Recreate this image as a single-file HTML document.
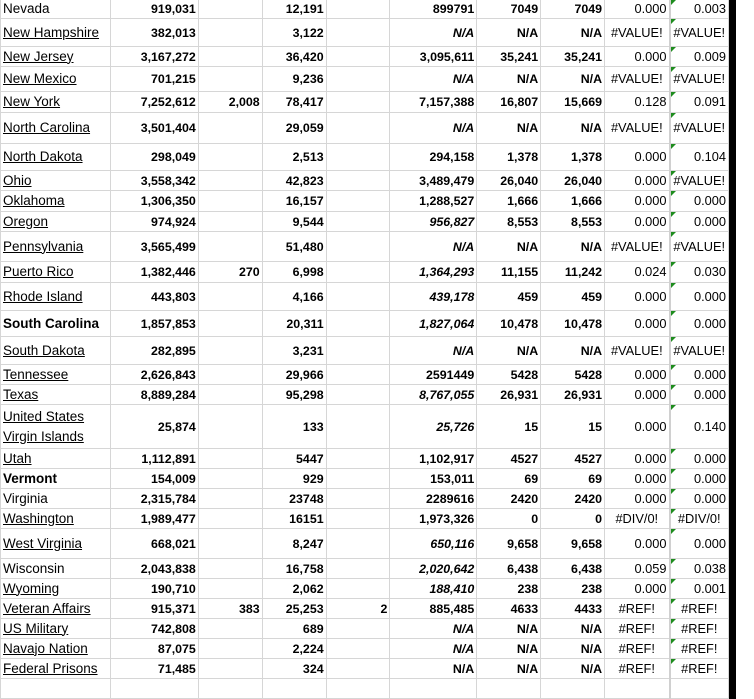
<!DOCTYPE html>
<html><head><meta charset="utf-8"><style>
html,body{margin:0;padding:0;background:#fff;width:754px;height:684px;overflow:hidden}
table{border-collapse:collapse;table-layout:fixed;position:absolute;left:0;top:-1px;font-family:"Liberation Sans",sans-serif;font-size:12.4px;color:#000}
td{border:1px solid #d6d6d6;padding:0 2px 0 2px;white-space:nowrap;overflow:hidden;text-align:right;font-weight:bold;vertical-align:middle;position:relative;line-height:14px}
td.a{text-align:left;font-weight:normal;font-size:13.5px;padding-left:2px}
td.a.u{text-decoration:underline}
td.a.b{font-weight:bold}
td.i,td.j{font-weight:normal;font-size:12.8px}
td.e{text-align:center}
td.it{font-style:italic}
td.k{background:#000;border:none}
td.l{border:none;border-left:0}
td.j::before{content:"";position:absolute;left:0;top:0;border-top:5px solid #1e8c1e;border-right:5px solid transparent}
td.i{border-right:2px solid #d0d0d0}
</style></head><body>
<table>
<colgroup><col style="width:110px"><col style="width:88px"><col style="width:64px"><col style="width:64px"><col style="width:64px"><col style="width:87px"><col style="width:64px"><col style="width:64px"><col style="width:65px"><col style="width:59px"><col style="width:8px"><col style="width:17px"></colgroup>
<tr style="height:19px"><td class="a">Nevada</td><td>919,031</td><td></td><td>12,191</td><td></td><td>899791</td><td>7049</td><td>7049</td><td class="i">0.000</td><td class="j">0.003</td><td class="k"></td><td class="l"></td></tr>
<tr style="height:28px"><td class="a u">New Hampshire</td><td>382,013</td><td></td><td>3,122</td><td></td><td class="it">N/A</td><td>N/A</td><td>N/A</td><td class="i e">#VALUE!</td><td class="j e">#VALUE!</td><td class="k"></td><td class="l"></td></tr>
<tr style="height:20px"><td class="a u">New Jersey</td><td>3,167,272</td><td></td><td>36,420</td><td></td><td>3,095,611</td><td>35,241</td><td>35,241</td><td class="i">0.000</td><td class="j">0.009</td><td class="k"></td><td class="l"></td></tr>
<tr style="height:25px"><td class="a u">New Mexico</td><td>701,215</td><td></td><td>9,236</td><td></td><td class="it">N/A</td><td>N/A</td><td>N/A</td><td class="i e">#VALUE!</td><td class="j e">#VALUE!</td><td class="k"></td><td class="l"></td></tr>
<tr style="height:21px"><td class="a u">New York</td><td>7,252,612</td><td>2,008</td><td>78,417</td><td></td><td>7,157,388</td><td>16,807</td><td>15,669</td><td class="i">0.128</td><td class="j">0.091</td><td class="k"></td><td class="l"></td></tr>
<tr style="height:31px"><td class="a u">North Carolina</td><td>3,501,404</td><td></td><td>29,059</td><td></td><td class="it">N/A</td><td>N/A</td><td>N/A</td><td class="i e">#VALUE!</td><td class="j e">#VALUE!</td><td class="k"></td><td class="l"></td></tr>
<tr style="height:27px"><td class="a u">North Dakota</td><td>298,049</td><td></td><td>2,513</td><td></td><td>294,158</td><td>1,378</td><td>1,378</td><td class="i">0.000</td><td class="j">0.104</td><td class="k"></td><td class="l"></td></tr>
<tr style="height:20px"><td class="a u">Ohio</td><td>3,558,342</td><td></td><td>42,823</td><td></td><td>3,489,479</td><td>26,040</td><td>26,040</td><td class="i">0.000</td><td class="j e">#VALUE!</td><td class="k"></td><td class="l"></td></tr>
<tr style="height:21px"><td class="a u">Oklahoma</td><td>1,306,350</td><td></td><td>16,157</td><td></td><td>1,288,527</td><td>1,666</td><td>1,666</td><td class="i">0.000</td><td class="j">0.000</td><td class="k"></td><td class="l"></td></tr>
<tr style="height:20px"><td class="a u">Oregon</td><td>974,924</td><td></td><td>9,544</td><td></td><td class="it">956,827</td><td>8,553</td><td>8,553</td><td class="i">0.000</td><td class="j">0.000</td><td class="k"></td><td class="l"></td></tr>
<tr style="height:30px"><td class="a u">Pennsylvania</td><td>3,565,499</td><td></td><td>51,480</td><td></td><td class="it">N/A</td><td>N/A</td><td>N/A</td><td class="i e">#VALUE!</td><td class="j e">#VALUE!</td><td class="k"></td><td class="l"></td></tr>
<tr style="height:21px"><td class="a u">Puerto Rico</td><td>1,382,446</td><td>270</td><td>6,998</td><td></td><td class="it">1,364,293</td><td>11,155</td><td>11,242</td><td class="i">0.024</td><td class="j">0.030</td><td class="k"></td><td class="l"></td></tr>
<tr style="height:28px"><td class="a u">Rhode Island</td><td>443,803</td><td></td><td>4,166</td><td></td><td class="it">439,178</td><td>459</td><td>459</td><td class="i">0.000</td><td class="j">0.000</td><td class="k"></td><td class="l"></td></tr>
<tr style="height:26px"><td class="a b">South Carolina</td><td>1,857,853</td><td></td><td>20,311</td><td></td><td class="it">1,827,064</td><td>10,478</td><td>10,478</td><td class="i">0.000</td><td class="j">0.000</td><td class="k"></td><td class="l"></td></tr>
<tr style="height:28px"><td class="a u">South Dakota</td><td>282,895</td><td></td><td>3,231</td><td></td><td class="it">N/A</td><td>N/A</td><td>N/A</td><td class="i e">#VALUE!</td><td class="j e">#VALUE!</td><td class="k"></td><td class="l"></td></tr>
<tr style="height:20px"><td class="a u">Tennessee</td><td>2,626,843</td><td></td><td>29,966</td><td></td><td>2591449</td><td>5428</td><td>5428</td><td class="i">0.000</td><td class="j">0.000</td><td class="k"></td><td class="l"></td></tr>
<tr style="height:20px"><td class="a u">Texas</td><td>8,889,284</td><td></td><td>95,298</td><td></td><td class="it">8,767,055</td><td>26,931</td><td>26,931</td><td class="i">0.000</td><td class="j">0.000</td><td class="k"></td><td class="l"></td></tr>
<tr style="height:44px"><td class="a u" style="line-height:20px">United States<br>Virgin Islands</td><td>25,874</td><td></td><td>133</td><td></td><td class="it">25,726</td><td>15</td><td>15</td><td class="i">0.000</td><td class="j">0.140</td><td class="k"></td><td class="l"></td></tr>
<tr style="height:20px"><td class="a u">Utah</td><td>1,112,891</td><td></td><td>5447</td><td></td><td>1,102,917</td><td>4527</td><td>4527</td><td class="i">0.000</td><td class="j">0.000</td><td class="k"></td><td class="l"></td></tr>
<tr style="height:20px"><td class="a b">Vermont</td><td>154,009</td><td></td><td>929</td><td></td><td>153,011</td><td>69</td><td>69</td><td class="i">0.000</td><td class="j">0.000</td><td class="k"></td><td class="l"></td></tr>
<tr style="height:20px"><td class="a">Virginia</td><td>2,315,784</td><td></td><td>23748</td><td></td><td>2289616</td><td>2420</td><td>2420</td><td class="i">0.000</td><td class="j">0.000</td><td class="k"></td><td class="l"></td></tr>
<tr style="height:20px"><td class="a u">Washington</td><td>1,989,477</td><td></td><td>16151</td><td></td><td>1,973,326</td><td>0</td><td>0</td><td class="i e">#DIV/0!</td><td class="j e">#DIV/0!</td><td class="k"></td><td class="l"></td></tr>
<tr style="height:30px"><td class="a u">West Virginia</td><td>668,021</td><td></td><td>8,247</td><td></td><td class="it">650,116</td><td>9,658</td><td>9,658</td><td class="i">0.000</td><td class="j">0.000</td><td class="k"></td><td class="l"></td></tr>
<tr style="height:20px"><td class="a">Wisconsin</td><td>2,043,838</td><td></td><td>16,758</td><td></td><td class="it">2,020,642</td><td>6,438</td><td>6,438</td><td class="i">0.059</td><td class="j">0.038</td><td class="k"></td><td class="l"></td></tr>
<tr style="height:20px"><td class="a u">Wyoming</td><td>190,710</td><td></td><td>2,062</td><td></td><td class="it">188,410</td><td>238</td><td>238</td><td class="i">0.000</td><td class="j">0.001</td><td class="k"></td><td class="l"></td></tr>
<tr style="height:20px"><td class="a u">Veteran Affairs</td><td>915,371</td><td>383</td><td>25,253</td><td>2</td><td>885,485</td><td>4633</td><td>4433</td><td class="i e">#REF!</td><td class="j e">#REF!</td><td class="k"></td><td class="l"></td></tr>
<tr style="height:20px"><td class="a u">US Military</td><td>742,808</td><td></td><td>689</td><td></td><td class="it">N/A</td><td>N/A</td><td>N/A</td><td class="i e">#REF!</td><td class="j e">#REF!</td><td class="k"></td><td class="l"></td></tr>
<tr style="height:20px"><td class="a u">Navajo Nation</td><td>87,075</td><td></td><td>2,224</td><td></td><td class="it">N/A</td><td>N/A</td><td>N/A</td><td class="i e">#REF!</td><td class="j e">#REF!</td><td class="k"></td><td class="l"></td></tr>
<tr style="height:20px"><td class="a u">Federal Prisons</td><td>71,485</td><td></td><td>324</td><td></td><td>N/A</td><td>N/A</td><td>N/A</td><td class="i e">#REF!</td><td class="j e">#REF!</td><td class="k"></td><td class="l"></td></tr>
<tr style="height:20px"><td class="a"></td><td></td><td></td><td></td><td></td><td></td><td></td><td></td><td class="i"></td><td></td><td class="k"></td><td class="l"></td></tr>
</table>
</body></html>
